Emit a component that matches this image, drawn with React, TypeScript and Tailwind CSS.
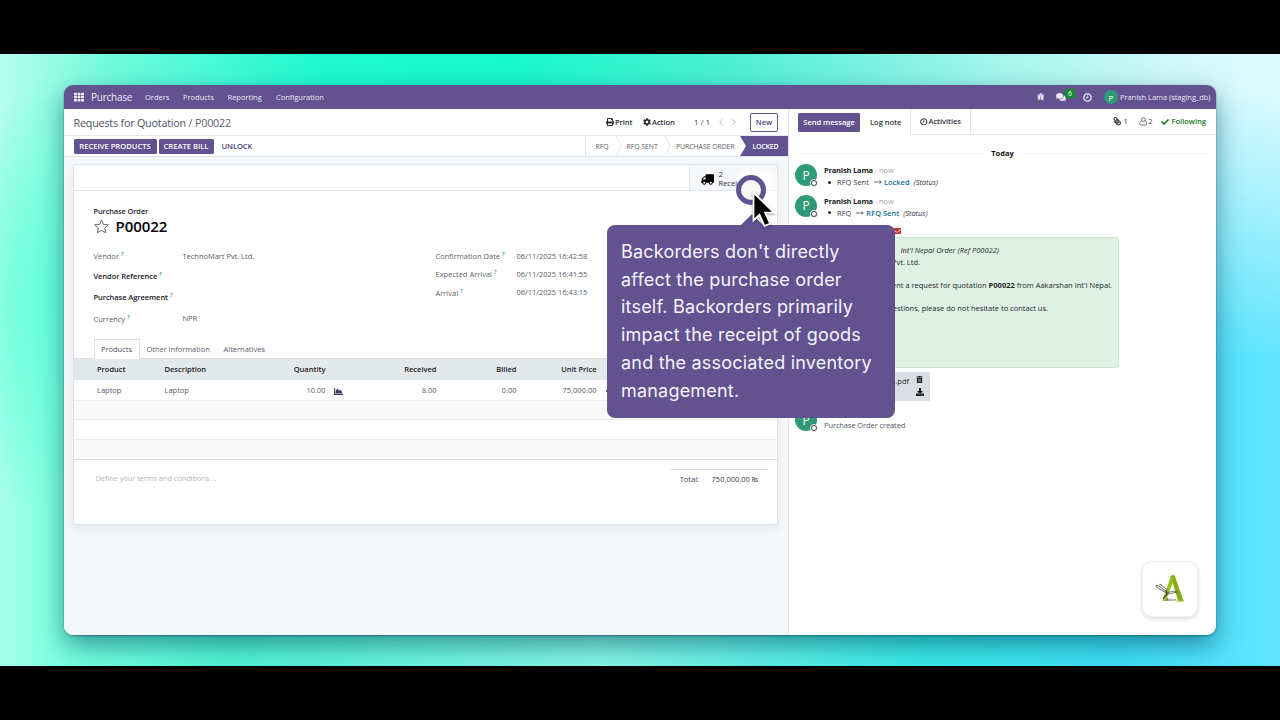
import type { ReactNode } from "react";
import {
  FaBug,
  FaChartArea,
  FaCheck,
  FaCog,
  FaComments,
  FaDownload,
  FaEnvelope,
  FaPaperclip,
  FaPrint,
  FaTh,
  FaTrashAlt,
  FaTruck,
} from "react-icons/fa";
import { ChevronLeft, ChevronRight } from "lucide-react";

function ClockIcon({ className }: { className: string }) {
  return (
    <svg viewBox="0 0 18 18" className={className} fill="none" stroke="currentColor">
      <circle cx="9" cy="9" r="7.4" strokeWidth="2.6" />
      <path d="M9.500 4.800v5H6" strokeWidth="1.800" />
    </svg>
  );
}

function UserOutline() {
  return (
    <svg viewBox="0 0 14 14" className="h-[8.5px] w-[8.5px]" fill="none" stroke="currentColor" strokeWidth="1.1">
      <circle cx="7" cy="4.2" r="3.2" />
      <path d="M4.200 6.500C2 6.800 1 8.500 1 11c0 1.300.8 2.200 2 2.200h8c1.200 0 2-.9 2-2.200 0-2.500-1-4.200-3.200-4.500" />
    </svg>
  );
}

function StarOutline() {
  return (
    <svg viewBox="0 0 30 30" className="h-[15px] w-[15px]" fill="none" stroke="#55585f" strokeWidth="1.800" strokeLinejoin="round">
      <path d="M15 2l3.900 8.800 9.600.9-7.200 6.400 2.100 9.400L15 22.600l-8.400 4.900 2.100-9.400-7.200-6.400 9.600-.9z" />
    </svg>
  );
}

function ArrowRight() {
  return (
    <svg viewBox="0 0 16 8" className="ml-[5px] mr-[2px] h-[4px] w-[8px]" fill="none" stroke="#3a3d44" strokeWidth="1.500">
      <path d="M0 4h14M11 1l3.500 3L11 7" />
    </svg>
  );
}

function Avatar({ className }: { className: string }) {
  return (
    <div className={`flex shrink-0 items-center justify-center rounded-full bg-[#2f9a78] text-white ${className}`}>
      P
    </div>
  );
}

function ChatAvatar() {
  return (
    <div className="relative h-[22px] w-[22px] shrink-0">
      <Avatar className="h-[22px] w-[22px] text-[12px]" />
      <span className="absolute -bottom-px -right-px h-[8px] w-[8px] rounded-full border border-white bg-[#3f424a] p-[1px]">
        <span className="block h-full w-full rounded-full bg-white" />
      </span>
    </div>
  );
}

function Navbar() {
  return (
    <nav className="flex h-[24px] items-center bg-[#625290] pl-[10px] pr-[5px] text-[#ece9f4]">
      <FaTh className="mr-[7px] h-[10px] w-[10px]" />
      <span className="w-[54px] text-[10px] tracking-[-0.25px]">Purchase</span>
      <span className="w-[38px]">Orders</span>
      <span className="w-[44.5px]">Products</span>
      <span className="w-[48.5px]">Reporting</span>
      <span>Configuration</span>
      <div className="ml-auto flex items-center">
        <FaBug className="mr-[12px] h-[7.5px] w-[7.5px]" />
        <div className="relative mr-[17px]">
          <FaComments className="h-[10px] w-[10px]" />
          <span className="absolute -top-[3.5px] left-[9px] flex h-[9.5px] w-[10px] items-center justify-center rounded-[2px] bg-[#118b2c] text-[7px] text-white">
            6
          </span>
        </div>
        <ClockIcon className="mr-[12px] h-[9px] w-[9px]" />
        <Avatar className="h-[14px] w-[14px] text-[8px]" />
        <span className="ml-[2px] w-[91px] whitespace-nowrap tracking-[-0.04px]">Pranish Lama (staging_db)</span>
      </div>
    </nav>
  );
}

function ControlPanel() {
  return (
    <div className="flex h-[27px] items-center border-b border-[#e4e7eb] pl-[9.5px] pr-[10px]">
      <span className="text-[10.8px] tracking-[-0.22px] text-[#5b5d6c]">
        <span className="text-[#4f4f63]">Requests for Quotation</span> / P00022
      </span>
      <div className="ml-auto flex items-center font-semibold text-[#2d3039]">
        <FaPrint className="mr-[1px] h-[8px] w-[8px]" />
        <span className="w-[28px] tracking-[-0.05px]">Print</span>
        <FaCog className="mr-[1px] h-[8px] w-[8px]" />
        <span className="w-[42px] tracking-[-0.05px]">Action</span>
        <span className="w-[22px] font-normal tracking-[0.2px]">1 / 1</span>
        <ChevronLeft className="h-[10px] w-[10px] text-[#a5a8ae]" />
        <ChevronRight className="ml-[3px] mr-[11px] h-[10px] w-[10px] text-[#a5a8ae]" />
        <button className="h-[19px] w-[28px] rounded-[2px] border border-[#625290] text-[#4f4285]">New</button>
      </div>
    </div>
  );
}

function Step({ children, width }: { children: ReactNode; width: string }) {
  return (
    <div className={`relative flex h-full items-center text-[#5c5f66] ${width}`}>
      {children}
      <svg viewBox="0 0 6 20" className="absolute right-0 top-0 h-full w-[6px]" fill="none" stroke="#dfe2e6" strokeWidth="0.8">
        <path d="M0 0l5.500 10L0 20" />
      </svg>
    </div>
  );
}

function StatusBar() {
  return (
    <div className="flex h-[21px] items-center border-b border-[#e1e4e8] pl-[9.5px] text-[7.6px]">
      <button className="h-[15px] w-[83px] whitespace-nowrap rounded-[1.5px] bg-[#625290] font-semibold text-white">
        RECEIVE PRODUCTS
      </button>
      <button className="ml-[2px] h-[15px] w-[55px] whitespace-nowrap rounded-[1.5px] bg-[#625290] font-semibold text-white">
        CREATE BILL
      </button>
      <span className="ml-[8px] font-semibold tracking-[-0.1px] text-[#4a3f78]">UNLOCK</span>
      <div className="ml-auto flex h-full items-center border-l border-[#e1e4e8] pl-[9.5px] text-[6.9px] font-medium tracking-[-0.05px]">
        <Step width="w-[26px]">RFQ</Step>
        <Step width="w-[49px] pl-[5px]">RFQ SENT</Step>
        <div className="w-[69.5px] whitespace-nowrap pl-[5.5px] text-[#5c5f66]">PURCHASE ORDER</div>
        <div className="flex h-full w-[48px] items-center bg-[#625290] pl-[12.5px] font-semibold tracking-[-0.15px] text-white [clip-path:polygon(0_0,100%_0,100%_100%,0_100%,6px_50%)]">
          LOCKED
        </div>
      </div>
    </div>
  );
}

function Label({ children, bold }: { children: ReactNode; bold?: boolean }) {
  return (
    <span className={bold ? "font-semibold tracking-[-0.06px] text-[#16181c]" : "text-[#5b5f68]"}>
      {children}
      <span className="relative -top-[3px] ml-[2px] text-[5.5px] font-semibold text-[#2b8a94]">?</span>
    </span>
  );
}

type FieldProps = {
  label: string;
  value?: string;
  bold?: boolean;
  height: string;
  labelWidth: string;
};

function Field({ label, value, bold, height, labelWidth }: FieldProps) {
  return (
    <div className={`flex items-center ${height}`}>
      <div className={`${labelWidth} shrink-0 whitespace-nowrap pt-[2px]`}>
        <Label bold={bold}>{label}</Label>
      </div>
      <span className="whitespace-nowrap tracking-[-0.03px] text-[#595b6b]">{value}</span>
    </div>
  );
}

function OrderLines() {
  return (
    <div>
      <div className="grid h-[22px] grid-cols-[67.5px_86px_75px_111px_80px_80px_1fr] items-center border-t border-[#dcdfe3] bg-[#e3e8eb] pl-[23px] font-semibold text-[#1d2026]">
        <span>Product</span>
        <span>Description</span>
        <span className="text-right">Quantity</span>
        <span className="text-right">Received</span>
        <span className="text-right">Billed</span>
        <span className="text-right">Unit Price</span>
      </div>
      <div className="grid h-[21px] grid-cols-[67.5px_86px_75px_20px_91px_80px_80px_1fr] items-center border-b border-[#ebedef] pl-[23px] text-[#575a63]">
        <span>Laptop</span>
        <span>Laptop</span>
        <span className="text-right">10.00</span>
        <FaChartArea className="ml-[8px] mt-[2px] h-[9px] w-[9px] text-[#3f3567]" />
        <span className="text-right">8.00</span>
        <span className="text-right">0.00</span>
        <span className="text-right">75,000.00</span>
        <span className="mt-[1px] ml-[9px] h-[2px] w-[3px] bg-[#625290]" />
      </div>
      <div className="h-[19px] border-b border-[#e8eaec] bg-[#fafafb]" />
      <div className="h-[20px] border-b border-[#eceeef]" />
      <div className="h-[20px] border-b border-[#d8dbdf] bg-[#fafafb]" />
    </div>
  );
}

function OrderForm() {
  return (
    <main className="flex flex-1 flex-col bg-[#f5f8fa] pl-[9px] pr-[10px] pt-[7px]">
      <div className="h-[361px] border border-[#dfe2e7] bg-white shadow-[0_4px_8px_rgba(50,60,80,0.08)]">
        <div className="flex h-[26px] justify-end border-b border-[#e3e6ea]">
          <div className="flex w-[88px] items-center border-l border-[#e3e6ea] bg-[#f5f7f9] pl-[11px] text-[#2d3039]">
            <FaTruck className="mr-[4.5px] mt-[3px] h-[13px] w-[13px] -scale-x-100 text-black" />
            <div className="pt-[2px] leading-[9px]">
              <div>2</div>
              <div>Receipts</div>
            </div>
          </div>
        </div>
        <div className="h-[166px] pl-[19.5px] pt-[14px]">
          <div className="font-semibold leading-[12px] tracking-[-0.15px] text-[#24272d]">Purchase Order</div>
          <div className="flex h-[19px] items-center">
            <StarOutline />
            <span className="ml-[7px] text-[15px] font-semibold tracking-[-0.05px] text-black">P00022</span>
          </div>
          <div className="flex pt-[10px]">
            <div className="w-[342px]">
              <Field label="Vendor" value="TechnoMart Pvt. Ltd." height="h-[20px]" labelWidth="w-[89px]" />
              <Field label="Vendor Reference" bold height="h-[20px]" labelWidth="w-[89px]" />
              <Field label="Purchase Agreement" bold height="h-[22px]" labelWidth="w-[89px]" />
              <Field label="Currency" value="NPR" height="h-[21px]" labelWidth="w-[89px]" />
            </div>
            <div className="pt-[1px]">
              <Field label="Confirmation Date" value="06/11/2025 16:42:58" height="h-[18px]" labelWidth="w-[81px]" />
              <Field label="Expected Arrival" value="06/11/2025 16:41:55" height="h-[18px]" labelWidth="w-[81px]" />
              <Field label="Arrival" value="06/11/2025 16:43:15" height="h-[19px]" labelWidth="w-[81px]" />
            </div>
          </div>
        </div>
        <div className="relative top-px -mt-[19px] flex h-[20px] items-center pl-[19.5px] text-[#5b5d6b]">
          <span className="flex h-[20px] w-[46px] items-center justify-center border border-b-0 border-[#dcdfe4] bg-white text-[#4c4f57]">
            Products
          </span>
          <span className="ml-[7px] w-[77px] whitespace-nowrap tracking-[-0.04px]">Other Information</span>
          <span>Alternatives</span>
        </div>
        <OrderLines />
        <div className="flex justify-between pl-[21.5px] pr-[9px] pt-[9px]">
          <span className="pt-[4px] tracking-[-0.1px] text-[#b5b7bc]">Define your terms and conditions ...</span>
          <div className="flex h-[20px] w-[97px] items-center justify-end border-t border-[#d3d6da] pr-[10px] text-[#3d4047]">
            <span className="mr-[12.5px]">Total:</span>
            <span className="whitespace-nowrap">750,000.00 ₨</span>
          </div>
        </div>
      </div>
    </main>
  );
}

function Message({ from, to }: { from: string; to: string }) {
  return (
    <div className="flex h-[30.5px]">
      <ChatAvatar />
      <div className="ml-[7px]">
        <div className="leading-[12px]">
          <span className="font-bold tracking-[-0.18px] text-[#1d2026]">Pranish Lama</span>
          <span className="tracking-[-0.1px] text-[#a4a7ad]"> - now</span>
        </div>
        <div className="flex items-center leading-[12px] text-[#3a3d44]">
          <span className="ml-[4px] mr-[6px] h-[3px] w-[3px] rounded-full bg-[#222]" />
          {from}
          <ArrowRight />
          <span className="font-semibold text-[#12708f]">{to}</span>
          <i className="ml-[4px] tracking-[-0.05px]">(Status)</i>
        </div>
      </div>
    </div>
  );
}

function Chatter() {
  return (
    <aside className="flex w-[428px] flex-col border-l border-[#e2e5e9] bg-white">
      <div className="flex h-[26px] items-stretch font-semibold text-[#33363d]">
        <div className="flex w-[122px] items-center border-r border-[#e2e5e9] pl-[9px]">
          <button className="h-[19px] w-[62px] whitespace-nowrap rounded-[1.5px] bg-[#625290] text-white">Send message</button>
          <span className="ml-[10px] whitespace-nowrap">Log note</span>
        </div>
        <div className="flex w-[60px] items-center border-b border-r border-[#e2e5e9] pl-[9px]">
          <ClockIcon className="mr-[1px] h-[7.5px] w-[7.5px]" />
          <span className="tracking-[-0.05px]">Activities</span>
        </div>
        <div className="flex flex-1 items-center justify-end border-b border-[#e2e5e9] pr-[10px]">
          <FaPaperclip className="mr-[1.5px] h-[8.5px] w-[8.5px] -scale-x-100" />
          <span className="mr-[11px] font-normal">1</span>
          <UserOutline />
          <span className="ml-px mr-[8px] font-normal">2</span>
          <FaCheck className="mr-[3px] h-[8px] w-[8px] text-[#0f6f1c]" />
          <span className="text-[#157a22]">Following</span>
        </div>
      </div>
      <div className="mt-[12px] flex items-center px-[8px] font-bold leading-[12px] text-[#111]">
        <span className="h-px flex-1 bg-[#f5f6f7]" />
        <span className="px-[6px]">Today</span>
        <span className="h-px flex-1 bg-[#f5f6f7]" />
      </div>
      <div className="flex flex-col pl-[6px] pt-[5px]">
        <Message from="RFQ Sent" to="Locked" />
        <Message from="RFQ" to="RFQ Sent" />
        <div className="flex h-[12px] items-center pl-[98px]">
          <FaEnvelope className="h-[8px] w-[8px] text-[#c9302c]" />
        </div>
        <div className="ml-[27px] h-[131px] w-[297px] whitespace-nowrap rounded-[3px] border border-[#cbe3d2] bg-[#dff1e4] pr-[6px] pt-[7px] text-right leading-[11.7px] text-[#24272c]">
          <div className="pr-[113px] italic">Int'l Nepal Order (Ref P00022)</div>
          <div className="pr-[192px]">Pvt. Ltd.</div>
          <div className="pt-[11.7px]">
            sent a request for quotation <b>P00022</b> from Aakarshan Int'l Nepal.
          </div>
          <div className="pr-[64px] pt-[11.7px]">questions, please do not hesitate to contact us.</div>
        </div>
        <div className="ml-[28px] mt-[4px] flex h-[29px] w-[107px] justify-end rounded-[1px] bg-[#dadde1] text-[#24272c]">
          <span className="pt-[4px]">P00022.pdf</span>
          <div className="flex w-[21px] flex-col items-center justify-center gap-[5px] pb-[2px] text-[#15171b]">
            <FaTrashAlt className="h-[7px] w-[7px]" />
            <FaDownload className="h-[8px] w-[8px]" />
          </div>
        </div>
        <div className="mt-[8px] flex">
          <ChatAvatar />
          <span className="ml-[7px] mt-[11px] tracking-[-0.1px] text-[#55585f]">Purchase Order created</span>
        </div>
      </div>
    </aside>
  );
}

function BrandWidget() {
  return (
    <div className="absolute bottom-[18px] right-[18px] flex h-[56px] w-[56px] items-center justify-center rounded-[10px] border border-[#eef0f1] bg-white shadow-[0_2px_4px_rgba(0,0,0,0.14)]">
      <svg viewBox="0 0 30 30" className="h-[30px] w-[30px]">
        <path d="M7.500 27L16 1.500h3.500L28.500 27H23L17.500 9l-6.500 18z" fill="#9abf1c" />
        <path d="M16 1.500h3.500L28.500 27H24z" fill="#88ad18" />
        <g fill="none" stroke="#44474b" strokeLinecap="round">
          <path d="M11 17.500L4 12M10.500 18.500L2 13.500M12 16L7 11.500" strokeWidth="0.8" />
          <path d="M12 19.500c3-2.500 7-2.500 10.500-1.500l-9.500 2" strokeWidth="0.7" />
          <path d="M11 16.500l1 3.500-3.500 4" strokeWidth="1.3" />
        </g>
        <path d="M4 12l-2.500-1M2 13.500L.8 11.500M7 11.500L4.500 10" stroke="#777" strokeWidth="1.2" />
        <text x="11" y="26.500" fontSize="4" fill="#444" fontFamily="Liberation Sans">
          Akars
        </text>
        <path d="M21 27.500h8" stroke="#c9dc7c" strokeWidth="1.2" />
      </svg>
    </div>
  );
}

function Callout() {
  return (
    <>
      <div className="absolute left-[675px] top-[83px] h-[48px] w-[38px] rounded-[8px] bg-white/70 blur-[3px]" />
      <svg viewBox="0 0 24 14" className="absolute left-[676px] top-[127px] h-[14px] w-[24px]">
        <path d="M0 14L12 2l12 12z" fill="#625290" />
      </svg>
      <div className="absolute left-[543px] top-[140px] h-[192.5px] w-[288px] rounded-[8px] bg-[#625290] pl-[14px] pt-[13px] font-['Inter',sans-serif] text-[18px] leading-[27.7px] tracking-[0.2px] text-[#f5f3fa]">
        Backorders don't directly
        <br />
        affect the purchase order
        <br />
        itself. Backorders primarily
        <br />
        impact the receipt of goods
        <br />
        and the associated inventory
        <br />
        management.
      </div>
      <div className="absolute left-[672px] top-[90px] h-[30px] w-[30px] rounded-full border-[5.5px] border-[#625290] bg-[#f8f8f5]" />
      <svg
        viewBox="0 0 24 38"
        className="absolute left-[687px] top-[104px] h-[38px] w-[24px] overflow-visible drop-shadow-[0_1px_1px_rgba(0,0,0,0.4)]"
      >
        <path d="M2.500 3.500v28l6-5.700 5 11.200 5.500-2.500-4.900-10.900h8.900z" fill="#000" stroke="#fff" strokeWidth="1.8" />
      </svg>
    </>
  );
}

export default function App() {
  return (
    <div className="flex h-[720px] w-[1280px] flex-col justify-center overflow-hidden bg-black font-['Open_Sans','Noto_Sans',sans-serif] text-[7.5px] leading-[11px]">
      <div className="relative h-[612px] overflow-hidden bg-[linear-gradient(90deg,#a6ffe8_0%,#78ffe0_5%,#50f5d2_18%,#86f5e6_47%,#38eae8_72%,#3fdff8_88%,#62e5ff_100%)] px-[64px] pt-[31px]">
        {/* upper half of the backdrop fades into the lower one */}
        <div className="absolute inset-0 bg-[linear-gradient(90deg,#b6fdec_0%,#6ffbdc_9%,#1ef9d0_25%,#16f8cb_40%,#52efd6_58%,#a4f6ec_78%,#d2f8fb_92%,#dcfaff_100%)] [mask-image:linear-gradient(180deg,#000_0%,#000_6%,transparent_50%)]" />
        <div className="absolute inset-0 bg-[radial-gradient(ellipse_100px_220px_at_4%_40%,#66ffdc_0%,transparent_100%)]" />
        <div className="relative h-[550px] w-[1152px] rounded-[9px] shadow-[0_1px_2px_rgba(0,60,80,0.5),0_10px_26px_rgba(0,70,90,0.55)]">
          <div className="flex h-full flex-col overflow-hidden rounded-[9px]">
            <Navbar />
            <div className="flex flex-1">
              <div className="flex flex-1 flex-col bg-white">
                <ControlPanel />
                <StatusBar />
                <OrderForm />
              </div>
              <Chatter />
            </div>
          </div>
          <BrandWidget />
          <Callout />
        </div>
      </div>
    </div>
  );
}
